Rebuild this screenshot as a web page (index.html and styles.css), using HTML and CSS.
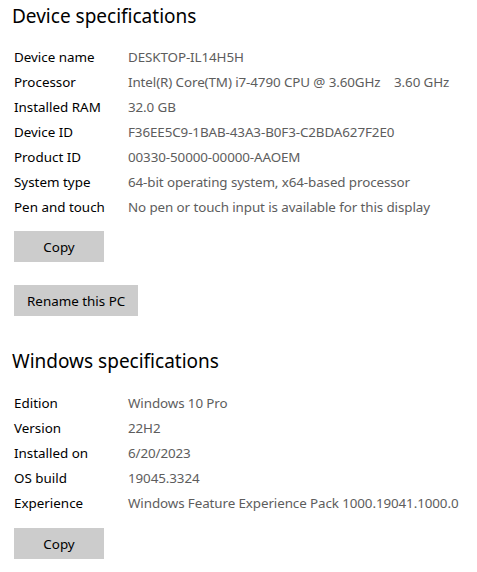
FILE: index.html
```html
<!DOCTYPE html>
<html lang="en">
<head>
    <meta charset="UTF-8">
    <title>About</title>
    <link rel="stylesheet" href="styles.css">
</head>
<body>
    <section class="specs">
        <h2>Device specifications</h2>
        <div class="rows">
            <div class="row"><span class="label">Device name</span><span class="value">DESKTOP-IL14H5H</span></div>
            <div class="row"><span class="label">Processor</span><span class="value">Intel(R) Core(TM) i7-4790 CPU @ 3.60GHz&nbsp;&nbsp;&nbsp; 3.60 GHz</span></div>
            <div class="row"><span class="label">Installed RAM</span><span class="value">32.0 GB</span></div>
            <div class="row"><span class="label">Device ID</span><span class="value">F36EE5C9-1BAB-43A3-B0F3-C2BDA627F2E0</span></div>
            <div class="row"><span class="label">Product ID</span><span class="value">00330-50000-00000-AAOEM</span></div>
            <div class="row"><span class="label">System type</span><span class="value">64-bit operating system, x64-based processor</span></div>
            <div class="row"><span class="label">Pen and touch</span><span class="value">No pen or touch input is available for this display</span></div>
        </div>
        <button class="btn copy">Copy</button>
        <button class="btn">Rename this PC</button>
    </section>

    <section class="specs">
        <h2>Windows specifications</h2>
        <div class="rows">
            <div class="row"><span class="label">Edition</span><span class="value">Windows 10 Pro</span></div>
            <div class="row"><span class="label">Version</span><span class="value">22H2</span></div>
            <div class="row"><span class="label">Installed on</span><span class="value">6/20/2023</span></div>
            <div class="row"><span class="label">OS build</span><span class="value">19045.3324</span></div>
            <div class="row"><span class="label">Experience</span><span class="value">Windows Feature Experience Pack 1000.19041.1000.0</span></div>
        </div>
        <button class="btn copy">Copy</button>
    </section>
</body>
</html>
```

FILE: styles.css
```css
body {
    margin: 0;
    padding: 0 14px;
    background-color: #ffffff;
    color: #000000;
    font-family: "Noto Sans", "Open Sans", sans-serif;
    font-size: 13.4px;
}
.specs {
    display: flex;
    flex-direction: column;
    align-items: flex-start;
}
.specs h2 {
    margin: 2px 0 0 -2px;
    font-size: 19px;
    font-weight: 400;
    line-height: 28px;
}
.rows {
    margin-top: 15px;
    display: flex;
    flex-direction: column;
}
.row {
    display: flex;
    height: 25px;
    line-height: 25px;
    white-space: nowrap;
}
.label {
    width: 114px;
    flex-shrink: 0;
}
.value {
    color: #5d5d5d;
    letter-spacing: -0.1px;
}
.btn {
    margin-top: 11px;
    height: 31px;
    padding: 0 13px;
    border: none;
    background-color: #cccccc;
    color: #000000;
    font-family: inherit;
    font-size: 13.4px;
}
.btn.copy {
    width: 90px;
}
.specs .btn + .btn {
    margin-top: 23px;
}
.specs + .specs {
    margin-top: 29px;
}
.specs + .specs .rows {
    margin-top: 16px;
}
.specs + .specs .btn {
    margin-top: 12px;
}
```
